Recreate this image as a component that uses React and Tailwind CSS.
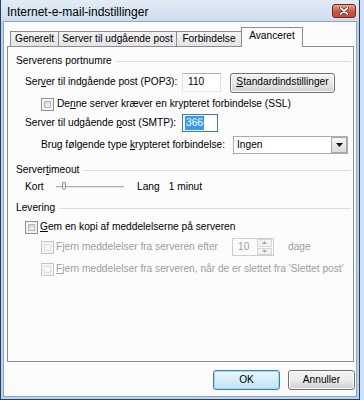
import React from "react";

const U = ({ children }) => <span className="underline underline-offset-[1px]">{children}</span>;

const CheckBox = ({ disabled }) => (
  <div
    className={`w-[13px] h-[13px] shrink-0 border p-[2px] bg-[#f4f4f4] ${
      disabled ? "border-[#c4c5c7]" : "border-[#8e8f8f]"
    }`}
  >
    <div
      className={`w-full h-full border ${
        disabled
          ? "border-[#e0e1e2] bg-[#f7f7f7]"
          : "border-[#b2b5b9] bg-gradient-to-br from-[#cfd1d4] to-[#f7f7f7]"
      }`}
    />
  </div>
);

const GroupHeader = ({ children }) => (
  <div className="flex items-center h-[14px] shrink-0 pl-[8px] pr-[2px]">
    <span className="whitespace-nowrap">{children}</span>
    <div className="flex-1 h-px bg-[#d5dfe5] ml-[4px] mt-[1px]" />
  </div>
);

const Tab = ({ children, w, active, first }) =>
  active ? (
    <div
      className={`${w} h-[20px] -ml-px -mb-px relative z-10 bg-[#fcfcfc] border border-b-0 border-[#898c95] flex items-center justify-center pb-[2px]`}
    >
      {children}
    </div>
  ) : (
    <div
      className={`${w} h-[15px] border border-b-0 ${
        first ? "" : "border-l-0"
      } border-[#898c95] bg-gradient-to-b from-[#f3f3f3] to-[#e4e4e4] flex items-center justify-center`}
    >
      {children}
    </div>
  );

const Button = ({ children, w, def }) => (
  <div
    className={`${w} h-[20px] rounded-[3px] border flex items-center justify-center ${
      def
        ? "border-[#3c7fb1] bg-gradient-to-b from-[#eaf6fd] to-[#c2e4f6] shadow-[inset_0_0_0_1px_#9fd8f5]"
        : "border-[#707070] bg-gradient-to-b from-[#f2f2f2] via-[#ebebeb] to-[#cfcfcf] shadow-[inset_0_0_0_1px_#fcfcfc]"
    }`}
  >
    {children}
  </div>
);

export default function App() {
  return (
    <div className="w-[364px] h-[400px] bg-[#cfe2f4] flex font-['Liberation_Sans',Arial,sans-serif] text-[10.2px] text-black leading-none overflow-hidden">
      <div className="w-[360px] h-[400px] border-x border-b border-[#2c3f5e] bg-[#b9d3ec] flex flex-col">
        {/* title bar */}
        <div className="h-[21px] shrink-0 bg-gradient-to-b from-[#e3ecf6] to-[#cddcee] flex items-center pl-[6px] pr-[3px]">
          <span className="text-[12px] text-[#000] pt-[3px]">Internet-e-mail-indstillinger</span>
          <div className="ml-auto mt-[1px] w-[24px] h-[14px] rounded-[3px] border border-[#6d2a22] bg-gradient-to-b from-[#e9a391] via-[#d2593f] to-[#c44a31] flex items-center justify-center">
            <svg width="10" height="8" viewBox="0 0 10 8">
              <path d="M1.5 1 L8.5 7 M8.5 1 L1.5 7" stroke="#3a1510" strokeWidth="3" strokeLinecap="round" />
              <path d="M1.5 1 L8.5 7 M8.5 1 L1.5 7" stroke="#fff" strokeWidth="1.8" strokeLinecap="round" />
            </svg>
          </div>
        </div>
        {/* body */}
        <div className="flex-1 mx-[2px] mb-[2px] border border-[#8aa6c6] bg-[#fbfbfb] flex flex-col">
          {/* tabs */}
          <div className="h-[19px] shrink-0 mt-[5px] pl-[6px] flex items-end">
            <Tab w="w-[49px]" first>Generelt</Tab>
            <Tab w="w-[118px]">Server til udgående post</Tab>
            <Tab w="w-[65px]">Forbindelse</Tab>
            <Tab w="w-[62px]" active>Avanceret</Tab>
          </div>
          {/* panel */}
          <div className="h-[316px] shrink-0 ml-[3px] mr-[2px] border border-[#898c95] bg-[#fcfcfc] flex flex-col pt-[7px]">
            <GroupHeader>Serverens portnumre</GroupHeader>

            <div className="flex items-center h-[19px] shrink-0 mt-[5px] pl-[17px]">
              <span className="w-[157px] whitespace-nowrap">
                Ser<U>v</U>er til indgående post (POP3):
              </span>
              <div className="w-[39px] h-[19px] border border-[#abadb3] border-b-[#e3e9ef] border-x-[#dbdfe6] bg-white flex items-center pl-[5px]">
                110
              </div>
              <div className="ml-[9px]">
                <Button w="w-[105px]">
                  <span>
                    <U>S</U>tandardindstillinger
                  </span>
                </Button>
              </div>
            </div>

            <div className="flex items-center h-[13px] shrink-0 mt-[6px] pl-[33px]">
              <CheckBox />
              <span className="ml-[3px] whitespace-nowrap">
                De<U>n</U>ne server kræver en krypteret forbindelse (SSL)
              </span>
            </div>

            <div className="flex items-center h-[18px] shrink-0 mt-[3px] pl-[17px]">
              <span className="w-[157px] whitespace-nowrap">
                Server til udgående <U>p</U>ost (SMTP):
              </span>
              <div className="w-[36px] h-[18px] border border-[#3d7bad] bg-white flex items-center pl-[2px]">
                <span className="bg-[#3399ff] text-white px-[1px] py-[2px]">366</span>
              </div>
            </div>

            <div className="flex items-center h-[18px] shrink-0 mt-[4px] pl-[33px]">
              <span className="w-[192px] whitespace-nowrap">
                Brug følgende type <U>k</U>rypteret forbindelse:
              </span>
              <div className="w-[115px] h-[18px] border border-[#abadb3] bg-white flex items-center">
                <span className="pl-[3px] flex-1">Ingen</span>
                <div className="w-[16px] h-[16px] border border-[#a4a7ac] bg-gradient-to-b from-[#f5f5f5] to-[#dcdcdc] flex items-center justify-center">
                  <svg width="7" height="4" viewBox="0 0 7 4">
                    <path d="M0 0 H7 L3.5 4 Z" fill="#111" />
                  </svg>
                </div>
              </div>
            </div>

            <div className="mt-[9px]">
              <GroupHeader>
                Server<U>t</U>imeout
              </GroupHeader>
            </div>

            <div className="flex items-center h-[14px] shrink-0 mt-[3px] pl-[17px]">
              <span className="w-[31px]">Kort</span>
              <div className="w-[68px] h-[10px] relative flex items-center">
                <div className="w-full h-[2px] border-t border-[#a9acb1] border-b border-b-[#e6e8ea]" />
                <svg className="absolute left-[4px] top-[0px]" width="8" height="9" viewBox="0 0 8 9">
                  <path d="M2.5 0.5 V6 L4 8 L5.5 6 V0.5 Z" fill="#f3f3f3" stroke="#8d9196" />
                </svg>
              </div>
              <span className="ml-[13px]">Lang</span>
              <span className="ml-[9px]">1 minut</span>
            </div>

            <div className="mt-[7px]">
              <GroupHeader>Levering</GroupHeader>
            </div>

            <div className="flex items-center h-[13px] shrink-0 mt-[6px] pl-[17px]">
              <CheckBox />
              <span className="ml-[2px] whitespace-nowrap">
                <U>G</U>em en kopi af meddelelserne på serveren
              </span>
            </div>

            <div className="flex items-center h-[18px] shrink-0 mt-[4px] pl-[33px] text-[#9d9d9d]">
              <CheckBox disabled />
              <span className="ml-[2px] w-[176px] whitespace-nowrap">
                F<U>j</U>ern meddelelser fra serveren efter
              </span>
              <div className="w-[42px] h-[18px] border border-[#cbcdd0] bg-[#fbfbfb] flex items-center">
                <span className="pl-[5px] flex-1">10</span>
                <div className="w-[15px] h-[16px] flex flex-col mr-px gap-px">
                  <div className="flex-1 border border-[#d3d5d8] bg-[#f2f2f2] flex items-center justify-center">
                    <svg width="5" height="3" viewBox="0 0 5 3">
                      <path d="M0 3 H5 L2.5 0 Z" fill="#a8a8a8" />
                    </svg>
                  </div>
                  <div className="flex-1 border border-[#d3d5d8] bg-[#f2f2f2] flex items-center justify-center">
                    <svg width="5" height="3" viewBox="0 0 5 3">
                      <path d="M0 0 H5 L2.5 3 Z" fill="#a8a8a8" />
                    </svg>
                  </div>
                </div>
              </div>
              <span className="ml-[14px]">dage</span>
            </div>

            <div className="flex items-center h-[13px] shrink-0 mt-[7px] pl-[33px] text-[#9d9d9d]">
              <CheckBox disabled />
              <span className="ml-[2px] whitespace-nowrap">
                <U>F</U>jern meddelelser fra serveren, når de er slettet fra 'Slettet post'
              </span>
            </div>
          </div>
          {/* buttons */}
          <div className="flex shrink-0 justify-end gap-[8px] mt-[8px] pr-[1px]">
            <Button w="w-[67px]" def>OK</Button>
            <Button w="w-[67px]">Annuller</Button>
          </div>
        </div>
      </div>
    </div>
  );
}
